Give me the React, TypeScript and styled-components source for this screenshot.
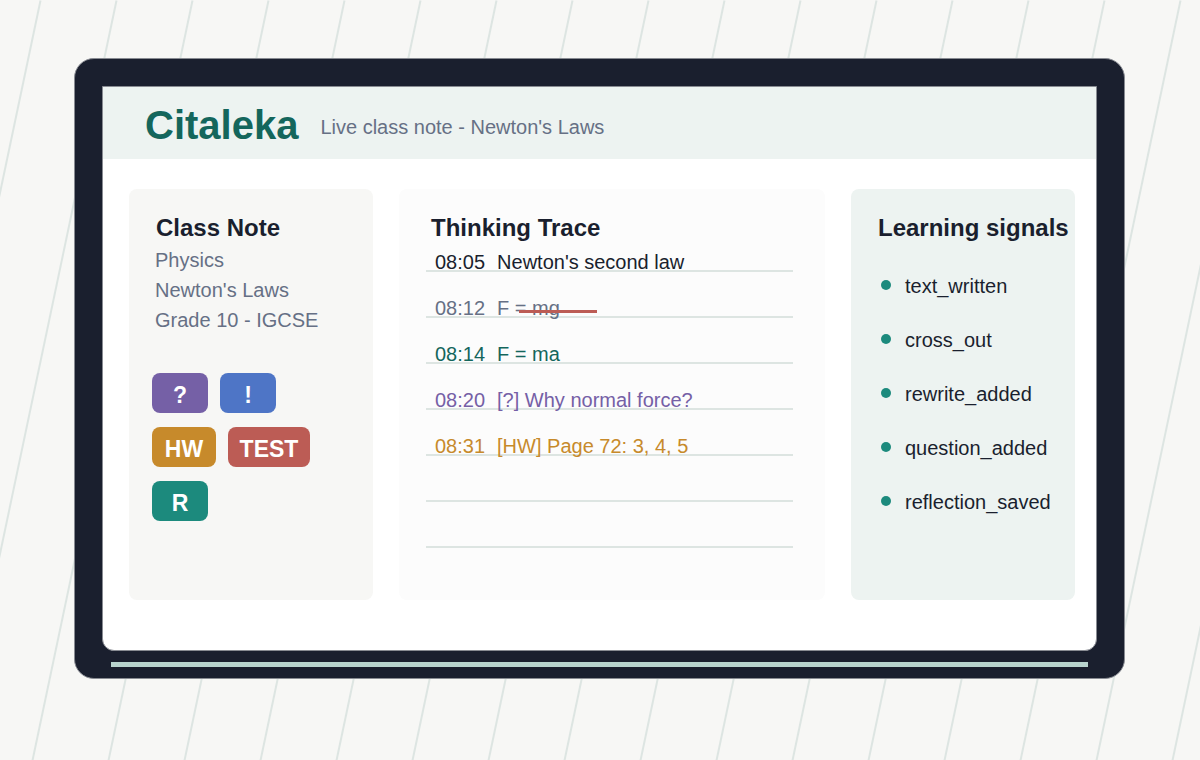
import React from "react";
import styled, { createGlobalStyle } from "styled-components";

const color = {
  paper: "#f7f7f5",
  ink: "#1a1f2e",
  slate: "#667085",
  mint: "#edf3f1",
  rule: "#dde5e2",
  edge: "#888b92",
  strip: "#b8d3ce",
  green: "#14665c",
  teal: "#1c8a7d",
  purple: "#7560a6",
  blue: "#4e75c6",
  amber: "#c78a2b",
  red: "#bc5c55",
};

const GlobalStyle = createGlobalStyle`
  *, *::before, *::after { box-sizing: border-box; }
  body {
    margin: 0;
    background: ${color.paper};
    color: ${color.ink};
    font: 20px/30px "Liberation Sans", Arial, sans-serif;
  }
  h1, h2, p, ul, ol { margin: 0; padding: 0; }
  ul, ol { list-style: none; }
`;

const Page = styled.main`
  position: relative;
  display: flex;
  min-height: 100vh;
  padding: 58px 75px 81px 74px;
`;

const Stripes = styled.svg`
  position: absolute;
  inset: 0;
  width: 100%;
  height: 100%;
`;

const Laptop = styled.div`
  position: relative;
  flex: 1;
  display: flex;
  flex-direction: column;
  padding: 27px 27px 11px;
  border: 1px solid ${color.edge};
  border-radius: 20px;
  background: ${color.ink};
`;

const Screen = styled.div`
  flex: 1;
  display: flex;
  flex-direction: column;
  border: 1px solid ${color.edge};
  border-radius: 0 0 12px 12px;
  background: #fff;
`;

const BaseStrip = styled.div`
  height: 5px;
  margin: 11px 9px 0;
  background: ${color.strip};
`;

const Header = styled.header`
  display: flex;
  align-items: center;
  gap: 22px;
  height: 72px;
  padding: 4px 42px 0;
  background: ${color.mint};
`;

const Brand = styled.h1`
  font-size: 40px;
  line-height: 48px;
  color: ${color.green};
`;

const Subtitle = styled.p`
  padding-top: 4px;
  color: ${color.slate};
`;

const Columns = styled.div`
  flex: 1;
  display: grid;
  grid-template-columns: 244px 1fr 224px;
  gap: 26px;
  padding: 30px 21px 50px 26px;
`;

const Panel = styled.section<{ $bg: string }>`
  padding: 23px 0 23px 27px;
  border-radius: 8px;
  background: ${(p) => p.$bg};
`;

const Title = styled.h2<{ $indent?: number }>`
  padding-left: ${(p) => p.$indent ?? 0}px;
  font-size: 24px;
  line-height: 32px;
  white-space: nowrap;
`;

const Details = styled.div`
  margin: 1px 0 0 -1px;
  color: ${color.slate};
`;

const Tags = styled.div`
  display: flex;
  flex-wrap: wrap;
  gap: 14px 12px;
  width: 170px;
  margin: 38px 0 0 -4px;
`;

const Tag = styled.button<{ $bg: string; $width: number }>`
  width: ${(p) => p.$width}px;
  height: 40px;
  padding: 4px 0 0;
  border: 0;
  border-radius: 8px;
  background: ${(p) => p.$bg};
  color: #fff;
  font: bold 23px/32px "Liberation Sans", Arial, sans-serif;
  cursor: pointer;
`;

const Trace = styled.ol`
  margin-right: 32px;
`;

/* The writing sits directly on the ruled line, so descenders cross it. */
const TraceRow = styled.li<{ $color?: string }>`
  display: flex;
  align-items: flex-end;
  gap: 12px;
  height: 46px;
  padding-left: 9px;
  border-bottom: 2px solid ${color.rule};
  color: ${(p) => p.$color ?? color.ink};
  line-height: 16px;
  white-space: nowrap;

  &:first-child { height: 28px; }
`;

const Entry = styled.span<{ $crossed?: boolean }>`
  position: relative;

  &::after {
    content: "";
    display: ${(p) => (p.$crossed ? "block" : "none")};
    position: absolute;
    top: 10px;
    left: 22px;
    width: 78px;
    height: 3px;
    background: ${color.red};
  }
`;

const Signals = styled.ul`
  padding: 15px 0 0 3px;
`;

const Signal = styled.li`
  display: flex;
  align-items: center;
  gap: 14px;
  height: 54px;

  &::before {
    content: "";
    flex: none;
    width: 10px;
    height: 10px;
    margin-bottom: 2px;
    border-radius: 50%;
    background: ${color.teal};
  }
`;

const tags = [
  { label: "?", bg: color.purple, width: 56 },
  { label: "!", bg: color.blue, width: 56 },
  { label: "HW", bg: color.amber, width: 64 },
  { label: "TEST", bg: color.red, width: 82 },
  { label: "R", bg: color.teal, width: 56 },
];

const trace = [
  { time: "08:05", text: "Newton's second law", color: color.ink },
  { time: "08:12", text: "F = mg", color: color.slate, crossed: true },
  { time: "08:14", text: "F = ma", color: color.green },
  { time: "08:20", text: "[?] Why normal force?", color: color.purple },
  { time: "08:31", text: "[HW] Page 72: 3, 4, 5", color: color.amber },
];

const signals = ["text_written", "cross_out", "rewrite_added", "question_added", "reflection_saved"];

const stripeStarts = Array.from({ length: 18 }, (_, i) => 40 + i * 76);

export default function App() {
  return (
    <>
      <GlobalStyle />
      <Page>
        <Stripes viewBox="0 0 1200 760" preserveAspectRatio="xMidYMid slice" aria-hidden="true">
          {stripeStarts.map((x) => (
            <line key={x} x1={x + 0.5} y1={0.5} x2={x - 159.5} y2={760.5} stroke={color.rule} strokeWidth={2} />
          ))}
        </Stripes>
        <Laptop>
          <Screen>
            <Header>
              <Brand>Citaleka</Brand>
              <Subtitle>Live class note - Newton's Laws</Subtitle>
            </Header>
            <Columns>
              <Panel $bg={color.paper}>
                <Title>Class Note</Title>
                <Details>
                  <p>Physics</p>
                  <p>Newton's Laws</p>
                  <p>Grade 10 - IGCSE</p>
                </Details>
                <Tags>
                  {tags.map((t) => (
                    <Tag key={t.label} type="button" $bg={t.bg} $width={t.width}>
                      {t.label}
                    </Tag>
                  ))}
                </Tags>
              </Panel>
              <Panel $bg="#fcfcfc">
                <Title $indent={5}>Thinking Trace</Title>
                <Trace>
                  {trace.map((row) => (
                    <TraceRow key={row.time} $color={row.color}>
                      <time>{row.time}</time>
                      <Entry $crossed={row.crossed}>{row.text}</Entry>
                    </TraceRow>
                  ))}
                  <TraceRow />
                  <TraceRow />
                </Trace>
              </Panel>
              <Panel $bg={color.mint}>
                <Title>Learning signals</Title>
                <Signals>
                  {signals.map((s) => (
                    <Signal key={s}>{s}</Signal>
                  ))}
                </Signals>
              </Panel>
            </Columns>
          </Screen>
          <BaseStrip />
        </Laptop>
      </Page>
    </>
  );
}
